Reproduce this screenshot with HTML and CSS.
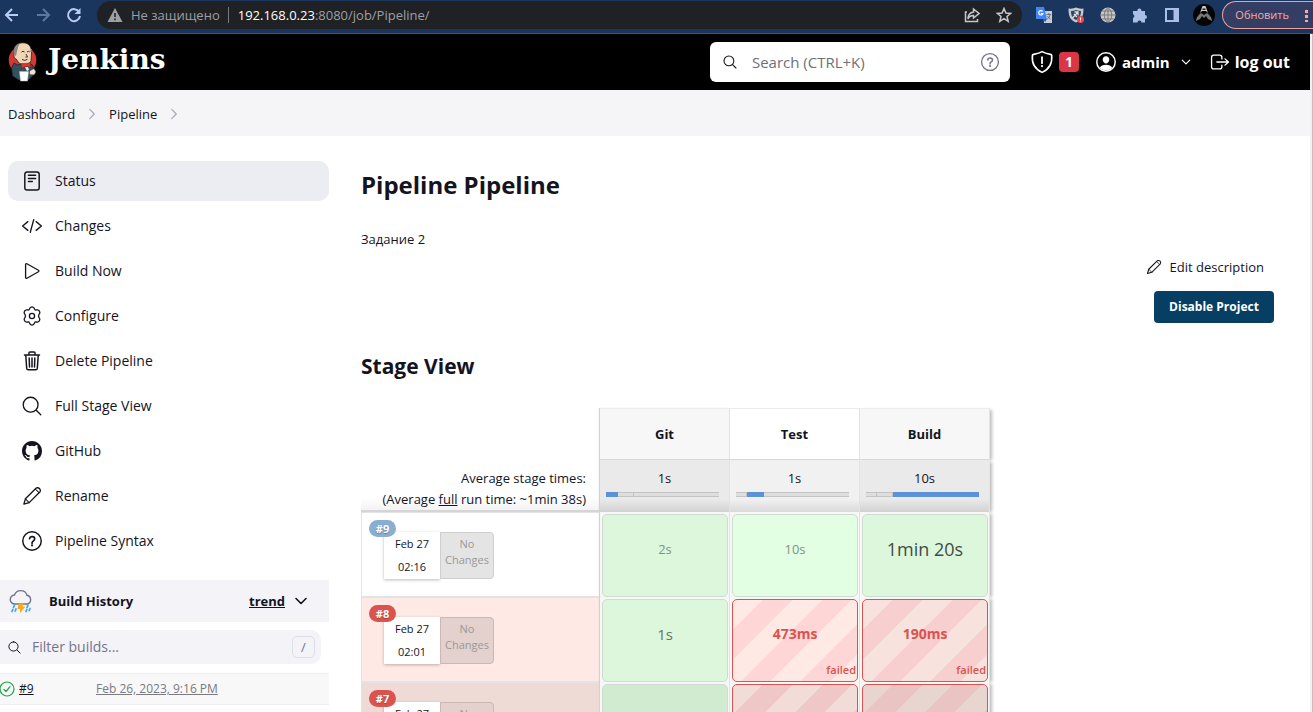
FILE: index.html
```html
<!DOCTYPE html>
<html lang="en">
<head>
<meta charset="utf-8">
<title>Pipeline [Jenkins]</title>
<link rel="stylesheet" href="styles.css">
</head>
<body>
<svg class="defs" aria-hidden="true">
  <symbol id="i-search" viewBox="0 0 512 512"><path d="M221.09 64a157.09 157.09 0 10157.09 157.09A157.1 157.1 0 00221.09 64z"/><path d="M338.29 338.29L448 448"/></symbol>
  <symbol id="i-pencil" viewBox="0 0 512 512"><path d="M358.6 57.100a37 37 0 0 1 15-9c33-8 60 3 78 21s27 45 12 75l-14 17L184 425 48 464l39-136z"/><path d="M340 77l95 95M87 328l97 97" stroke-width="26"/></symbol>
  <symbol id="i-help" viewBox="0 0 512 512"><path d="M256 40a216 216 0 100 432 216 216 0 000-432z"/><path d="M200 202c1-16 6-28 18-38 12-9 24-12 41-12 36 0 60 21 60 52 0 24-13 38-32 50-20 12-29 24-29 43v12" stroke-width="40"/><circle cx="257" cy="356" r="26" fill="currentColor" stroke="none"/></symbol>
  <symbol id="i-down" viewBox="0 0 512 512"><path d="M96 176l160 160 160-160" stroke-width="52"/></symbol>
  <symbol id="i-right" viewBox="0 0 512 512"><path d="M160 60l192 196-192 196" stroke-width="50"/></symbol>
</svg>
<div class="app">
  <header class="chrome">
    <button class="nav" aria-label="Back"><svg viewBox="0 0 16 16"><path d="M14 8H2M8 2L2 8l6 6"/></svg></button>
    <button class="nav dim" aria-label="Forward"><svg viewBox="0 0 16 16"><path d="M2 8h12M8 2l6 6-6 6"/></svg></button>
    <button class="nav" aria-label="Reload"><svg viewBox="0 0 16 16"><path d="M13.200 5A6 6 0 1 0 14 9"/><path d="M14.500 1v6h-6z" fill="currentColor" stroke="none"/></svg></button>
    <div class="address">
      <svg class="warn" viewBox="0 0 16 16"><path d="M8 1l7.500 14H.5z" fill="currentColor"/><path d="M8 6v4M8 11.500v1.700" stroke="#202124" stroke-width="1.600"/></svg>
      <span class="insecure">Не защищено</span>
      <span class="url"><b>192.168.0.23</b>:8080/job/Pipeline/</span>
      <button class="share" aria-label="Share"><svg viewBox="0 0 16 16"><path d="M3 5H1.500v9.500h12V12"/><path d="M9.500 2l5.500 4.500L9.500 11V8.500C7 8.500 5 9.500 4 12c0-4 2-6.500 5.500-7z"/></svg></button>
      <button class="star" aria-label="Bookmark"><svg viewBox="0 0 16 16"><path d="M8 1.500l1.900 4.500 4.800.4-3.700 3.100 1.200 4.800L8 11.700l-4.200 2.600L5 9.500 1.300 6.400l4.800-.4z"/></svg></button>
    </div>
    <div class="extensions">
      <svg viewBox="0 0 16 16"><path d="M7 4h9v12H8z" fill="#c9ccd1"/><path d="M0 0h8l3 12H0z" fill="#4285f4"/><path d="M7 12h4l-2 3z" fill="#2a56c6"/><path d="M6.600 4.400A2.200 2.200 0 1 0 7 6.500H4.800" fill="none" stroke="#fff" stroke-width="1.200"/><path d="M10.500 7.500H15M12.800 6v1.500M14.200 7.500c-.4 2-1.500 3.500-3 4.500M11.500 9c.7 1.400 1.600 2.400 3 3" fill="none" stroke="#667" stroke-width=".9"/></svg>
      <svg viewBox="0 0 16 16"><path d="M.5 1.500Q5 2 8 .5q3 1.500 7.500 1C15.500 9 14 13 8 15.500 2 13 .5 9 .5 1.500z" fill="#c5c8cc"/><path d="M3 4q3 0 5-1 2 1 5 1c0 4-1 7-5 9-4-2-5-5-5-9z" fill="#31455f"/><path d="M4.500 11L10 5M6.500 5H10v3.500M6 7l3 3" fill="none" stroke="#dce1e8" stroke-width="1.300"/><circle cx="12.500" cy="12.500" r="3.500" fill="#f04848"/><path d="M12.500 10.500v2.500M12.500 13.600v1" stroke="#fff" stroke-width="1"/></svg>
      <svg viewBox="0 0 16 16"><circle cx="8" cy="8" r="7.500" fill="#c9c6c4"/><path d="M8 .5v15M.5 8h15M2 4h12M2 12h12M8 .5c-5 4-5 11 0 15M8 .5c5 4 5 11 0 15" fill="none" stroke="#747474" stroke-width=".9"/></svg>
      <svg viewBox="0 0 16 16"><path d="M1 4h4.500a2 2 0 1 1 3.800 0H13v4a2 2 0 1 1 0 4v3.500H9.500a2 2 0 0 0-4 0H1V11a2 2 0 0 0 0-3.800z" fill="#a9bfe6"/></svg>
      <svg viewBox="0 0 16 16"><path d="M1 1h14v14H1z" fill="#a9bfe6"/><path d="M3 3h6.500v10H3z" fill="#1a355e"/></svg>
    </div>
    <svg class="avatar" viewBox="0 0 22 22"><circle cx="11" cy="11" r="11" fill="#050505"/><path d="M7 9l2.500-7h3L15 9l-2-2H9z" fill="#c9c9c9"/><path d="M9.500 4.500h3V6h-3z" fill="#222"/><path d="M8 9c-3 2-5 5-5 8l4-2 2-3 2 2 2-2 2 3 4 2c0-3-2-6-5-8l-3 2z" fill="#777"/></svg>
    <button class="update">Обновить<span class="dots"></span></button>
  </header>
  <div class="viewport">
    <div class="page">
      <header class="top">
        <a class="brand" href="#">
          <svg viewBox="0 0 30 40"><circle cx="14.500" cy="18" r="13.800" fill="#d33833"/><path d="M6 21l-2.500 5 1 8 6 4h10l6-6-2-9-6-3-9 3z" fill="#335061" stroke="#111" stroke-width=".6"/><path d="M6 12C5 5 9 .8 15 .8c6.500 0 9 5 8.500 11l-.5 7c-1 3-3.500 4.500-7 4.500-3.500-1-6-2.500-7.500-6C6 16.500 5.500 14 6 12z" fill="#f0d6b7" stroke="#222" stroke-width=".8"/><path d="M6 13C4.500 6 8 2 12 1.500 9.500 4 10 7 9 9.500L8 14z" fill="#8b8782"/><path d="M23 10l.4-3" fill="none" stroke="#777" stroke-width="1.200"/><path d="M13.500 10q1.500-1.500 3 0M19 10q1.500-1.500 2.800 0M18 12l1.500 3h-2M14 17.500q3 2 5.500-.3" fill="none" stroke="#222" stroke-width=".9"/><path d="M13 21.500l5 0 4.500-1 .5 5-4.500-1-5 2z" fill="#d33833" stroke="#711" stroke-width=".5"/><path d="M17 25l3 0 1 3-2 1z" fill="#e7edf1"/><path d="M11.500 29.500h9l-1 9.500h-7z" fill="#fff" stroke="#bbb" stroke-width=".5"/><path d="M21.500 29l4.500-2.500 2 3.500-2 3-4.500-.5z" fill="#f0e2d2" stroke="#333" stroke-width=".5"/></svg>
          <span>Jenkins</span>
        </a>
        <label class="search"><svg class="ico"><use href="#i-search"/></svg><input type="text" placeholder="Search (CTRL+K)" aria-label="Search"><svg class="ico help"><use href="#i-help"/></svg></label>
        <a class="alerts" href="#"><svg class="ico" viewBox="0 0 512 512"><path d="M463.100 112.400C461.300 99.600 449.600 96.700 434.600 93.400 336 72 292.100 53.800 258.100 34.300c-34 19.500-80 37.700-178.600 59.100-15 3.300-26.700 6.200-28.500 19C34 275 95 404 258.100 477.700 421 404 478 275 463.100 112.400z"/><path d="M256 150v130" stroke-width="38"/><circle cx="256" cy="342" r="24" fill="currentColor" stroke="none"/></svg><span class="count">1</span></a>
        <a class="user" href="#"><svg class="ico" viewBox="0 0 512 512"><circle cx="256" cy="256" r="215" stroke-width="34"/><path d="M256 120c-47 0-80 36-77 84 4 48 38 86 77 86s73-38 77-86c3-49-30-84-77-84zM112 390c18-50 80-72 144-72s126 22 144 72c-80 85-208 85-288 0z" fill="currentColor" stroke="none"/></svg>admin<svg class="ico caret"><use href="#i-down"/></svg></a>
        <a class="logout" href="#"><svg class="ico" viewBox="0 0 512 512"><path d="M304 336v40a56 56 0 01-56 56H96a56 56 0 01-56-56V136a56 56 0 0156-56h152a56 56 0 0156 56v40M384 336l88-80-88-80M176 256h290"/></svg>log out</a>
      </header>
      <nav class="crumbs"><a href="#">Dashboard</a><svg class="ico"><use href="#i-right"/></svg><a href="#">Pipeline</a><svg class="ico"><use href="#i-right"/></svg></nav>
      <div class="body">
        <aside class="side">
          <nav class="tasks">
            <a class="active" href="#"><svg class="ico" viewBox="0 0 512 512"><rect x="72" y="24" width="368" height="464" rx="58" stroke-width="38"/><path d="M164 110h184M164 190h184M164 270h100" stroke-width="36"/></svg>Status</a>
            <a href="#"><svg class="ico" viewBox="0 0 512 512"><path d="M150 368L16 256l134-112M362 368l134-112-134-112M300 96l-88 320"/></svg>Changes</a>
            <a href="#"><svg class="ico" viewBox="0 0 512 512"><path d="M92 91v330c0 17 18 28 33 20l296-165c15-9 15-31 0-40L125 71c-15-8-33 3-33 20z"/></svg>Build Now</a>
            <a href="#"><svg class="ico" viewBox="0 0 512 512"><path d="M256 24c30 0 54 10 64 52 8 22 28 30 52 24 38-8 58 4 74 32s16 58-8 82c-18 18-18 66 0 84 24 24 24 52 8 80s-36 40-74 32c-24-6-44 2-52 24-10 42-34 54-64 54s-54-12-64-54c-8-22-28-30-52-24-38 8-58-4-74-32s-16-56 8-80c18-18 18-66 0-84-24-24-24-54-8-82s36-40 74-32c24 6 44-2 52-24 10-42 34-52 64-52z"/><circle cx="256" cy="256" r="66"/></svg>Configure</a>
            <a href="#"><svg class="ico" viewBox="0 0 512 512"><path d="M64 104h384M96 104l24 336c1 22 16 40 40 40h192c24 0 39-18 40-40l24-336M176 100V64c0-24 12-36 32-36h96c20 0 32 12 32 36v36M256 176v236M184 176l8 236M328 176l-8 236" stroke-width="38"/></svg>Delete Pipeline</a>
            <a href="#"><svg class="ico" viewBox="0 0 512 512"><path d="M221 32a190 190 0 100 380 190 190 0 000-380zM358 358l122 122"/></svg>Full Stage View</a>
            <a href="#"><svg class="ico github" viewBox="0 0 16 16"><path d="M8 0C3.580 0 0 3.580 0 8c0 3.540 2.290 6.530 5.470 7.590.4.070.55-.17.55-.38 0-.19-.01-.82-.01-1.490-2.010.37-2.530-.49-2.690-.94-.09-.23-.48-.94-.82-1.130-.28-.15-.68-.52-.01-.53.63-.01 1.080.58 1.230.82.72 1.210 1.870.87 2.330.66.07-.52.28-.87.51-1.070-1.780-.2-3.640-.89-3.640-3.950 0-.87.31-1.590.82-2.150-.08-.2-.36-1.020.08-2.120 0 0 .67-.21 2.200.82a7.600 7.600 0 014 0c1.530-1.040 2.200-.82 2.200-.82.44 1.100.16 1.920.08 2.120.51.56.82 1.270.82 2.150 0 3.070-1.870 3.750-3.650 3.950.29.25.54.73.54 1.480 0 1.070-.01 1.930-.01 2.200 0 .21.15.46.55.38A8.010 8.010 0 0016 8c0-4.420-3.580-8-8-8z"/></svg>GitHub</a>
            <a href="#"><svg class="ico"><use href="#i-pencil"/></svg>Rename</a>
            <a href="#"><svg class="ico" viewBox="22 22 468 468"><use href="#i-help" width="512" height="512"/></svg>Pipeline Syntax</a>
          </nav>
          <section class="history">
            <header>
              <svg class="storm" viewBox="0 0 24 24"><path d="M6 15a4.500 4.500 0 0 1-.5-9A6.600 6.600 0 0 1 18 6.300 4.500 4.500 0 0 1 18.500 15z" fill="none" stroke="#73738c" stroke-width="1.400"/><path d="M5.500 16l-1 2.500M3.800 20.500l-.8 2M7 20l-.8 2M19 16l-1 2.500M21 19.500l-.8 2M17.800 20.500l-.8 2" stroke="#2fa8f5" stroke-width="1.700" stroke-linecap="round"/><path d="M9.500 14.500h5l-1 3h3L11 24v-4H8.500z" fill="#fca91b"/></svg>
              <h2>Build History</h2><a href="#">trend</a><button aria-label="Collapse"><svg class="ico"><use href="#i-down"/></svg></button>
            </header>
            <label class="filter"><svg class="ico"><use href="#i-search"/></svg><input type="text" placeholder="Filter builds..." aria-label="Filter builds"><kbd>/</kbd></label>
            <div class="build"><svg class="ico" viewBox="0 0 16 16"><circle cx="8" cy="8" r="7"/><path d="M5 8.500l2 2 4-4.800"/></svg><a href="#">#9</a><a class="when" href="#">Feb 26, 2023, 9:16 PM</a></div>
          </section>
        </aside>
        <main class="main">
          <h1>Pipeline Pipeline</h1>
          <p class="desc">Задание 2</p>
          <div class="actions">
            <a href="#"><svg class="ico"><use href="#i-pencil"/></svg>Edit description</a>
            <button>Disable Project</button>
          </div>
          <h2 class="sub">Stage View</h2>
          <table class="stages">
            <colgroup><col class="c-run"><col><col><col></colgroup>
            <thead>
              <tr class="names"><td></td><th>Git</th><th>Test</th><th>Build</th></tr>
              <tr class="avg">
                <td>Average stage times:<br>(Average <u>full</u> run time: ~1min 38s)</td>
                <td>1s<div class="bar"><i style="width:11%"></i><s style="width:14%"></s></div></td>
                <td>1s<div class="bar"><s style="width:10%"></s><i style="width:15%"></i></div></td>
                <td>10s<div class="bar"><s style="width:10%"></s><s style="width:14%"></s><i style="width:76%"></i></div></td>
              </tr>
            </thead>
            <tbody>
              <tr class="ok">
                <td class="run"><div class="runbox"><span class="badge">#9</span><div class="date">Feb 27<br>02:16</div><div class="none">No Changes</div></div></td>
                <td><div class="cell t-low">2s</div></td><td><div class="cell t-low">10s</div></td><td><div class="cell t-high">1min 20s</div></td>
              </tr>
              <tr class="bad">
                <td class="run"><div class="runbox"><span class="badge">#8</span><div class="date">Feb 27<br>02:01</div><div class="none">No Changes</div></div></td>
                <td><div class="cell t-mid">1s</div></td><td><div class="cell fail">473ms<em>failed</em></div></td><td><div class="cell fail">190ms<em>failed</em></div></td>
              </tr>
              <tr class="bad dark">
                <td class="run"><div class="runbox"><span class="badge">#7</span><div class="date">Feb 27</div><div class="none">No</div></div></td>
                <td><div class="cell"></div></td><td><div class="cell fail"></div></td><td><div class="cell fail"></div></td>
              </tr>
            </tbody>
          </table>
        </main>
      </div>
    </div>
    <div class="scroll"></div>
  </div>
</div>
</body>
</html>
```

FILE: styles.css
```css
* { box-sizing: border-box; }
body { margin: 0; font-family: "Open Sans", "Noto Sans", sans-serif; font-size: 13px; line-height: 20px; color: #14141f; background: #fff; }
a { color: inherit; text-decoration: none; }
button { border: 0; padding: 0; background: none; color: inherit; font: inherit; }
input { border: 0; outline: 0; background: none; font: inherit; min-width: 0; flex: 1; padding: 0; }
svg { flex: none; display: block; }
.defs { position: absolute; width: 0; height: 0; }
.ico { fill: none; stroke: currentColor; stroke-width: 34; stroke-linecap: round; stroke-linejoin: round; width: 20px; height: 20px; }
.app { height: 100vh; display: flex; flex-direction: column; overflow: hidden; }

.chrome { flex: none; height: 34px; padding: 1px 0 4px 4px; display: flex; align-items: center; background: #1a355e; border-bottom: 1px solid #3d5577; overflow: hidden; }
.nav { margin-right: 15px; color: #b9cdf0; }
.nav.dim { color: #5d78a3; }
.nav svg { width: 16px; height: 16px; fill: none; stroke: currentColor; stroke-width: 2; }
.address { flex: 1; height: 28px; border-radius: 14px; background: #202124; color: #9aa0a6; display: flex; align-items: center; padding: 0 10px; font-size: 13px; }
.address svg { width: 16px; height: 16px; fill: none; stroke: currentColor; stroke-width: 1.5; }
.address .warn { stroke: none; margin-right: 8px; }
.insecure { padding-right: 8px; border-right: 1px solid #777b80; line-height: 16px; margin-right: 9px; }
.url { flex: 1; }
.url b { color: #fff; font-weight: 400; }
.share { margin-right: 16px; color: #c4c7cc; }
.star { color: #c4c7cc; }
.extensions { display: flex; gap: 16px; margin: 0 13px 0 14px; }
.extensions svg { width: 16px; height: 16px; }
.avatar { width: 22px; height: 22px; margin-right: 7px; }
.update { height: 28px; border: 1px solid #f2a19a; border-right: 0; border-radius: 14px 0 0 14px; background: #343d63; color: #f4a9a3; font-size: 11px; padding: 0 5px 0 12px; display: flex; align-items: center; gap: 16px; }
.dots { width: 3px; height: 13px; background: radial-gradient(circle, #f4a9a3 60%, transparent 70%) 0 0 / 3px 5px; }

.viewport { flex: 1; min-height: 0; display: flex; }
.page { flex: 1; min-width: 0; overflow: hidden; }
.scroll { flex: none; width: 3px; background: #f1f1f1; border-right: 1px solid #c1c1c1; }
.top { height: 56px; background: #000; color: #fff; display: flex; align-items: center; padding: 0 20px 0 8px; font-size: 15px; font-weight: 700; }
.brand { flex: 1; display: flex; align-items: center; gap: 10px; font-family: "DejaVu Serif", serif; font-size: 28px; line-height: 32px; }
.brand svg { width: 30px; height: 40px; }
.brand span { padding-bottom: 4px; }
.search { width: 300px; height: 40px; border-radius: 6px; background: #fff; display: flex; align-items: center; padding: 0 10px 0 12px; gap: 14px; color: #14141f; font-weight: 400; }
.search .ico { width: 16px; height: 16px; }
.search .help { width: 20px; height: 20px; color: #73738c; }
.search input::placeholder { color: #6f6f76; }
.alerts, .user, .logout { display: flex; align-items: center; }
.alerts { margin-left: 20px; gap: 5px; }
.alerts .ico { width: 24px; height: 24px; }
.count { width: 20px; height: 20px; border-radius: 4px; background: #dc3545; text-align: center; font-size: 14px; }
.user { margin-left: 16px; gap: 5px; }
.user .ico { width: 22px; height: 22px; }
.user .caret { width: 12px; height: 12px; margin-left: 5px; }
.logout { margin-left: 18px; gap: 5px; font-size: 16px; }
.crumbs { height: 46px; background: #f5f5f7; display: flex; align-items: center; padding: 1px 8px 0; gap: 11px; }
.crumbs .ico { width: 12px; height: 12px; color: #a7a7b8; }

.body { display: flex; gap: 32px; padding-right: 36px; }
.side { flex: none; width: 329px; padding-top: 25px; }
.tasks { padding-left: 8px; display: flex; flex-direction: column; gap: 5px; }
.tasks a { height: 40px; border-radius: 10px; display: flex; align-items: center; gap: 13px; padding-left: 14px; font-weight: 500; font-size: 14px; }
.tasks .active { background: #ecedf3; }
.tasks .github { fill: currentColor; stroke: none; }
.history { margin-top: 19px; }
.history header { height: 42px; background: #f3f3f8; display: flex; align-items: center; padding: 0 20px 0 9px; }
.storm { width: 24px; height: 24px; }
.history h2 { flex: 1; margin: 0 0 0 16px; font-size: 13px; font-weight: 700; }
.history header a { font-weight: 700; text-decoration: underline; }
.history header button { margin-left: 8px; }
.history header .ico { width: 16px; height: 16px; }
.filter { height: 34px; margin: 8px 8px 9px 0; border-radius: 0 10px 10px 0; background: #f3f3f8; display: flex; align-items: center; gap: 10px; padding: 0 6px 0 7px; }
.filter .ico { width: 15px; height: 15px; }
.filter input { font-size: 14px; font-weight: 500; }
.filter input::placeholder { color: #73738c; }
.filter kbd { width: 23px; height: 22px; border: 1px solid #dedee8; border-radius: 5px; text-align: center; font: inherit; color: #73738c; }
.build { height: 32px; background: #f8f8f8; border: solid #eeeef1; border-width: 1px 0; display: flex; align-items: center; font-size: 12px; }
.build .ico { width: 16px; height: 16px; stroke-width: 1.2; color: #1ea64b; margin: 0 4px 0 -1px; }
.build a { text-decoration: underline; width: 77px; }
.build .when { color: #7a7a80; width: auto; }

.main { flex: 1; min-width: 0; padding-top: 32px; }
h1 { margin: 0; font-size: 24px; line-height: 34px; }
.desc { margin: 27px 0 8px; }
.actions { display: flex; flex-direction: column; align-items: flex-end; gap: 14px; }
.actions a { display: flex; align-items: center; gap: 8px; padding-right: 10px; }
.actions .ico { width: 16px; height: 16px; }
.actions button { height: 32px; width: 120px; border-radius: 4px; background: #063f63; color: #fff; font-weight: 700; font-size: 12px; }
.sub { margin: 28px 0 27px; font-size: 21px; line-height: 30px; }
.stages { width: 629px; table-layout: fixed; border-collapse: separate; border-spacing: 0; text-align: center; }
.stages td, .stages th { padding: 0; vertical-align: top; }
.c-run { width: 239px; }
.stages td:not(:first-child), .stages th { border-right: 1px solid #e3e3e6; background: #f7f7f7; }
.stages td:nth-child(2), .stages th:nth-child(2) { box-shadow: -1px 0 1px #d2d2d6; }
.stages td:last-child, .stages th:last-child { box-shadow: 3px 1px 3px -1px #bdbdbd; }
.names th { height: 52px; line-height: 50px; border-top: 1px solid #ececee; border-bottom: 1px solid #d8d8d8; }
.stages .names th:nth-child(3) { background: #fff; }
.stages .avg td { height: 52px; padding-top: 8px; }
.stages .avg td:first-child { text-align: right; padding-right: 14px; line-height: 21px; border-bottom: 2px solid #d5d5d7; background: linear-gradient(#fff 75%, #f3f3f3); }
.stages .avg td:not(:first-child) { background: linear-gradient(#eaeaea 75%, #d2d2d2); }
.stages .avg td:nth-child(3) { background: linear-gradient(#f1f1f1 75%, #dadada); }
.bar { height: 5px; margin: 4px 10px 0 6px; display: flex; background: #dedede; border: solid #c4c4c4; border-width: 1px 0; }
.bar i { background: #5b92d8; margin: -1px 0; }
.bar s { border-right: 1px solid #c2c2c2; }
tbody td { height: 85px; }
.run { border: 1px solid #e3e3e6; border-right: 0; }
.bad .run { background: #ffe9e4; }
.dark .run { background: #efdbd6; }
.runbox { position: relative; display: flex; margin: 19px 0 0 22px; font-size: 11px; }
.badge { position: absolute; left: -15px; top: -12px; width: 27px; height: 17px; border-radius: 9px; background: #8aaed2; color: #fff; font-weight: 700; line-height: 17px; font-size: 11px; text-shadow: 0 1px 1px #0004; }
.bad .badge { background: #d9534f; }
.date { width: 56px; height: 47px; line-height: 23px; background: #fff; box-shadow: 0 1px 3px #0004; }
.none { width: 54px; height: 47px; line-height: 16px; padding-top: 3px; background: #e4e4e4; border: 1px solid #cfcfcf; border-radius: 0 4px 4px 0; color: #999; }
.bad .none { background: #e4d0cd; border-color: #cbb8b5; }
.cell { height: 83px; margin: 2px 1px 0 2px; border: 1px solid #d0dcd2; border-radius: 5px; background: #dcf7dc; position: relative; padding-top: 22px; line-height: 24px; }
.ok td:nth-child(3) .cell { background: #e3ffe3; }
.dark .cell { background: #d0ebd0; }
.t-low { font-size: 13px; color: #7f9482; }
.t-mid { font-size: 15px; color: #66756a; }
.t-high { font-size: 18px; color: #434b45; }
.cell.fail { border-color: #d9534f; color: #d9534f; font-weight: 700; font-size: 14px; background: repeating-linear-gradient(135deg, #ffe9e4 0 21px, #ffd6d6 21px 42px); }
.bad td:nth-child(4) .fail { background: repeating-linear-gradient(135deg, #f7e2dd 0 21px, #f7cfcf 21px 42px); }
.dark td:nth-child(3) .fail { background: repeating-linear-gradient(135deg, #f1dcd7 0 21px, #efc7c7 21px 42px); }
.dark td:nth-child(4) .fail { background: repeating-linear-gradient(135deg, #e9d5d0 0 21px, #eac3c3 21px 42px); }
.fail em { position: absolute; right: 1px; bottom: 3px; font-style: normal; font-size: 11px; line-height: 16px; font-weight: 600; }
```
